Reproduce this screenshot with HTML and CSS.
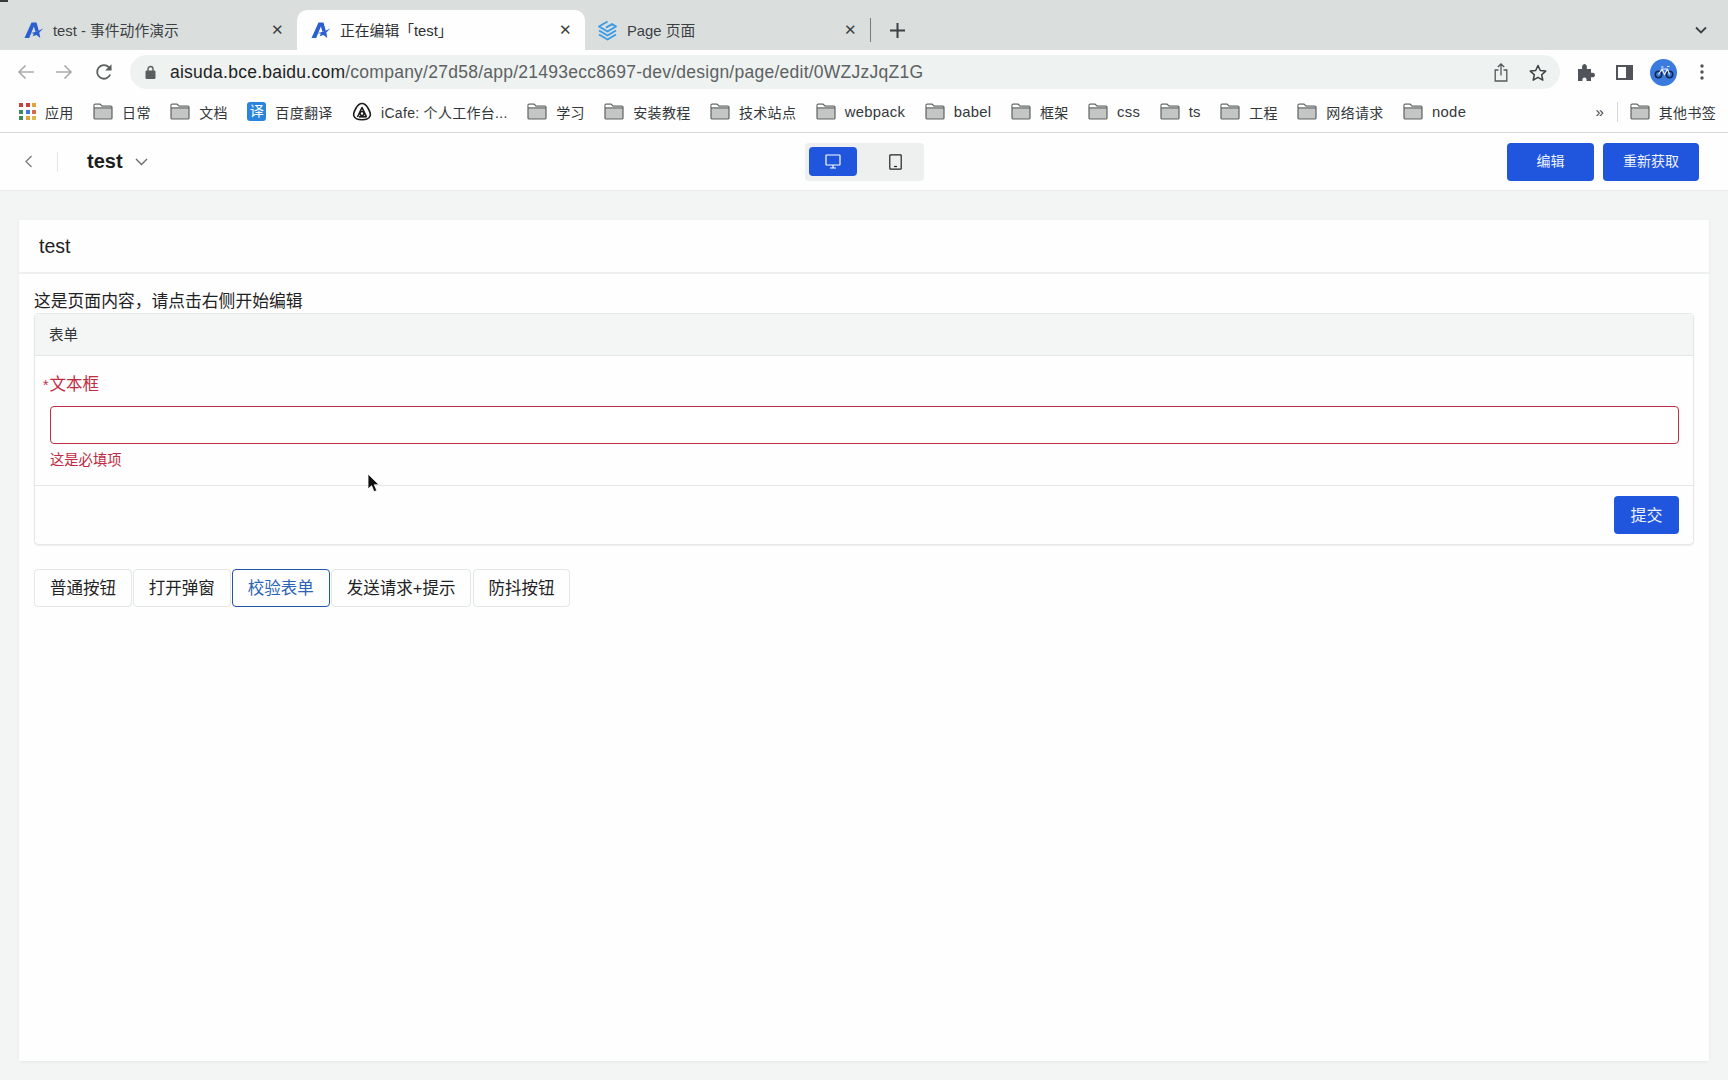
FILE: index.html
```html
<!DOCTYPE html>
<html lang="zh-CN">
<head>
    <meta charset="UTF-8">
    <title>正在编辑「test」</title>
    <link rel="stylesheet" href="styles.css">
</head>
<body>
    <svg class="defs" width="0" height="0">
        <symbol id="folder" viewBox="0 0 20 17">
            <path d="M1 15V2.200C1 1.500 1.500 1 2.200 1H7l2 2h8.800c.7 0 1.200.5 1.200 1.200V15c0 .6-.5 1-1.200 1H2.200C1.500 16 1 15.600 1 15z" fill="#c4c6c5" stroke="#5f6362" stroke-width="1.200"/>
            <path d="M1 5h18" stroke="#5f6362" stroke-width="1"/>
            <path d="M1.600 2h5.200l2 2H1.600z" fill="#fff"/>
        </symbol>
        <symbol id="aisuda" viewBox="0 0 20 18">
            <path d="M0.500 17 7.500 1.500h5l2.300 8.300-3.400 1-1.500-5.200-4.700 11.400z" fill="#2b5fd0"/>
            <path d="M6.500 12c3.500-.6 7.500-1.800 13-4.800l-4.200 4.300 1 5.500-3.800-3-4 1.200 1.400-2.500z" fill="#2b5fd0"/>
        </symbol>
    </svg>

    <span class="corner-mark"></span>

    <!-- Tab strip -->
    <div class="tabstrip">
        <div class="tab">
            <svg class="tab-icon" width="20" height="18"><use href="#aisuda"/></svg>
            <span class="tab-title">test - 事件动作演示</span>
            <span class="tab-close">✕</span>
        </div>
        <div class="tab tab-active">
            <svg class="tab-icon" width="20" height="18"><use href="#aisuda"/></svg>
            <span class="tab-title">正在编辑「test」</span>
            <span class="tab-close">✕</span>
        </div>
        <div class="tab tab-third">
            <svg class="tab-icon" width="21" height="21" viewBox="0 0 21 21" fill="none" stroke="#3d9be6" stroke-width="2" stroke-linejoin="round">
                <path d="M10.500 1.500 2 6.500l8.500 5 8.500-5-4-2.400-6 3.600"/>
                <path d="M2 10.500l8.500 5 8.500-5"/>
                <path d="M2 14.500l8.500 5 8.500-5"/>
            </svg>
            <span class="tab-title">Page 页面</span>
            <span class="tab-close">✕</span>
        </div>
        <span class="tab-sep"></span>
        <svg class="tab-new" width="15" height="15" viewBox="0 0 15 15"><path d="M7.500 0v15M0 7.500h15" stroke="#3c4043" stroke-width="2"/></svg>
        <svg class="tab-more" width="12" height="8" viewBox="0 0 12 8"><path d="M1 1.500l5 5 5-5" fill="none" stroke="#3c4043" stroke-width="1.800"/></svg>
    </div>

    <!-- Toolbar -->
    <div class="toolbar">
        <svg class="nav-icon" width="18" height="16" viewBox="0 0 18 16"><path d="M17 8H2M8.500 1.500 2 8l6.500 6.500" fill="none" stroke="#a9adac" stroke-width="1.700"/></svg>
        <svg class="nav-icon" width="18" height="16" viewBox="0 0 18 16"><path d="M1 8h15M9.500 1.500 16 8l-6.500 6.500" fill="none" stroke="#a9adac" stroke-width="1.700"/></svg>
        <svg class="nav-icon" width="18" height="18" viewBox="0 0 18 18"><path d="M15.200 11.500A6.800 6.800 0 1 1 13.800 4.200L16 6.500" fill="none" stroke="#5a5e5e" stroke-width="1.800"/><path d="M16.500 1.200v6.300h-6.300z" fill="#5a5e5e"/></svg>
        <div class="address">
            <svg width="11" height="14" viewBox="0 0 11 14"><path d="M3 6V4a2.500 2.500 0 0 1 5 0v2" fill="none" stroke="#5a5e5e" stroke-width="1.400"/><rect x="0.500" y="5.500" width="10" height="8.500" rx="1.200" fill="#5a5e5e"/></svg>
            <span class="url"><b>aisuda.bce.baidu.com</b>/company/27d58/app/21493ecc8697-dev/design/page/edit/0WZJzJqZ1G</span>
            <svg class="addr-share" width="14" height="19" viewBox="0 0 14 19" fill="none" stroke="#54585a" stroke-width="1.300"><path d="M4.500 7H1.200v11h11.600V7H9.500M7 12.500V1M3.800 4 7 1l3.200 3"/></svg>
            <svg width="18" height="17" viewBox="0 0 18 17"><path d="M9 1.500l2.300 5 5.400.6-4 3.700 1.100 5.300L9 13.400l-4.800 2.700 1.100-5.300-4-3.700 5.400-.6z" fill="none" stroke="#3c4043" stroke-width="1.500" stroke-linejoin="round"/></svg>
        </div>
        <svg class="tool-puzzle" width="18" height="18" viewBox="0 0 18 18"><path d="M1 6h4.200C4.600 3.200 5.600 1 7.500 1s2.900 2.200 2.300 5H14v3.800c2.500-.6 4 .4 4 2.200s-1.500 2.800-4 2.200V18H9.500c.5-2.200-.4-3.400-2-3.400S5 15.800 5.500 18H1z" fill="#50545a"/></svg>
        <svg class="tool-panel" width="17" height="15" viewBox="0 0 17 15"><rect x="1" y="1" width="15" height="13" fill="none" stroke="#50545a" stroke-width="2"/><rect x="10" y="1" width="6" height="13" fill="#50545a"/></svg>
        <div class="avatar">
            <svg width="20" height="14" viewBox="0 0 20 14" fill="none"><circle cx="4.500" cy="9.500" r="3.200" stroke="#16264a" stroke-width="1.600"/><circle cx="15.500" cy="9.500" r="3.200" stroke="#16264a" stroke-width="1.600"/><path d="M4.500 9.500 8 4h5.500l2 5.500M8 4l2.500 5.500 3-5.500M7 2h2.500M13 1.500h2.500" stroke="#e8eefa" stroke-width="1.100"/></svg>
        </div>
        <svg class="tool-kebab" width="4" height="16" viewBox="0 0 4 16" fill="#50545a"><circle cx="2" cy="2" r="1.700"/><circle cx="2" cy="8" r="1.700"/><circle cx="2" cy="14" r="1.700"/></svg>
    </div>

    <!-- Bookmarks -->
    <div class="bookmarks">
        <div class="bm">
            <span class="apps"><i class="c1"></i><i class="c1"></i><i class="c2"></i><i class="c3"></i><i class="c4"></i><i class="c5"></i><i class="c3"></i><i class="c2"></i><i class="c6"></i></span>
            应用
        </div>
        <div class="bm"><svg width="20" height="17"><use href="#folder"/></svg>日常</div>
        <div class="bm"><svg width="20" height="17"><use href="#folder"/></svg>文档</div>
        <div class="bm"><span class="fanyi">译</span>百度翻译</div>
        <div class="bm">
            <svg width="20" height="20" viewBox="0 0 20 20" fill="none" stroke="#1c1c1c" stroke-width="1.600" stroke-linejoin="round"><path d="M10 1.500c3 0 4.600 2 6.200 5 1.600 3 2.900 5 1.900 7.500-1 2.500-3.600 3.700-8.100 3.700S2.900 16.500 1.900 14s.3-4.500 1.900-7.500 3.200-5 6.200-5z"/><path d="M5.500 15 10 5.500 14.500 14.800"/><path d="M7 14.800h7.500"/><circle cx="10" cy="11.500" r="2"/></svg>
            iCafe: 个人工作台...
        </div>
        <div class="bm"><svg width="20" height="17"><use href="#folder"/></svg>学习</div>
        <div class="bm"><svg width="20" height="17"><use href="#folder"/></svg>安装教程</div>
        <div class="bm"><svg width="20" height="17"><use href="#folder"/></svg>技术站点</div>
        <div class="bm bm-latin"><svg width="20" height="17"><use href="#folder"/></svg>webpack</div>
        <div class="bm bm-latin"><svg width="20" height="17"><use href="#folder"/></svg>babel</div>
        <div class="bm"><svg width="20" height="17"><use href="#folder"/></svg>框架</div>
        <div class="bm bm-latin"><svg width="20" height="17"><use href="#folder"/></svg>css</div>
        <div class="bm bm-latin"><svg width="20" height="17"><use href="#folder"/></svg>ts</div>
        <div class="bm"><svg width="20" height="17"><use href="#folder"/></svg>工程</div>
        <div class="bm"><svg width="20" height="17"><use href="#folder"/></svg>网络请求</div>
        <div class="bm bm-latin"><svg width="20" height="17"><use href="#folder"/></svg>node</div>
        <span class="bm-more">»</span>
        <span class="bm-sep"></span>
        <div class="bm"><svg width="20" height="17"><use href="#folder"/></svg>其他书签</div>
    </div>

    <!-- App header -->
    <header class="app-header">
        <div class="header-left">
            <svg class="back" width="9" height="13" viewBox="0 0 9 13"><path d="M7.500 1 2 6.500 7.500 12" fill="none" stroke="#777b7d" stroke-width="1.300"/></svg>
            <span class="header-sep"></span>
            <span class="app-name">test</span>
            <svg width="13" height="8" viewBox="0 0 13 8"><path d="M1 1l5.500 5.500L12 1" fill="none" stroke="#666a6c" stroke-width="1.300"/></svg>
        </div>
        <div class="device-switch">
            <span class="device device-on">
                <svg width="16" height="15" viewBox="0 0 16 15" fill="none" stroke="#fff" stroke-width="1.200"><rect x="1" y="1" width="14" height="10" rx="0.500"/><path d="M8 11v3M5 14h6"/></svg>
            </span>
            <span class="device">
                <svg width="13" height="16" viewBox="0 0 13 16" fill="none" stroke="#222" stroke-width="1.200"><rect x="0.800" y="0.800" width="11.400" height="14.400" rx="0.800"/><path d="M5 12.500h3"/></svg>
            </span>
        </div>
        <div class="header-right">
            <button class="btn-primary btn-edit">编辑</button>
            <button class="btn-primary btn-fetch">重新获取</button>
        </div>
    </header>

    <!-- Page content -->
    <main class="page">
        <section class="card">
            <div class="card-title">test</div>
            <div class="card-body">
                <p class="intro">这是页面内容，请点击右侧开始编辑</p>
                <form class="panel">
                    <div class="panel-head">表单</div>
                    <div class="panel-body">
                        <label class="field-label"><span class="star">*</span>文本框</label>
                        <input class="field-input" type="text">
                        <div class="field-error">这是必填项</div>
                    </div>
                    <div class="panel-foot">
                        <button class="btn-primary btn-submit" type="button">提交</button>
                    </div>
                </form>
                <div class="btn-row">
                    <button class="btn">普通按钮</button>
                    <button class="btn">打开弹窗</button>
                    <button class="btn btn-focus">校验表单</button>
                    <button class="btn">发送请求+提示</button>
                    <button class="btn">防抖按钮</button>
                </div>
            </div>
        </section>
    </main>

    <!-- Mouse pointer caught in the capture -->
    <svg class="pointer" width="13" height="20" viewBox="0 0 13 20"><path d="M1 1v15l3.600-3.300 2.400 6 2.800-1.200-2.500-5.700H12z" fill="#111" stroke="#fff" stroke-width="0.800"/></svg>
</body>
</html>
```

FILE: styles.css
```css
* {
    box-sizing: border-box;
}

html, body {
    height: 100%;
}

body {
    margin: 0;
    height: 1080px;
    overflow: hidden;
    display: flex;
    flex-direction: column;
    font-family: "Liberation Sans", "Noto Sans CJK SC", sans-serif;
    color: #1f2224;
    background-color: #f3f5f4;
}

.defs {
    position: absolute;
}

.corner-mark {
    position: absolute;
    left: 0;
    top: 0;
    width: 8px;
    height: 2px;
    background-color: #3a3d3d;
}

/* Tab strip */
.tabstrip {
    height: 50px;
    flex: none;
    display: flex;
    align-items: flex-end;
    background-color: #dadfde;
    padding-right: 21px;
}

.tab {
    width: 297px;
    height: 40px;
    display: flex;
    align-items: center;
    padding: 0 13px 0 24px;
    font-size: 14.800px;
    color: #3c4043;
}

.tab-active {
    width: 288px;
    padding-left: 14px;
    background-color: #fdfefd;
    border-radius: 10px 10px 0 0;
    color: #2c2f31;
}

.tab-third {
    width: 285px;
    padding: 0 13px 0 12px;
}

.tab-icon {
    flex: none;
    margin-right: 9px;
}

.tab-title {
    flex: 1;
    padding-bottom: 2px;
    white-space: nowrap;
}

.tab-close {
    font-size: 15px;
    color: #3c4043;
}

.tab-sep {
    width: 1px;
    height: 24px;
    margin: 0 0 8px 0;
    background-color: #74797a;
}

.tab-new {
    margin: 0 0 12px 19px;
}

.tab-more {
    margin: 0 0 16px auto;
}

/* Toolbar */
.toolbar {
    height: 39px;
    flex: none;
    display: flex;
    align-items: center;
    background-color: #fdfefd;
    padding: 5px 0 0 17px;
}

.nav-icon {
    flex: none;
    margin-right: 20px;
}

.nav-icon:nth-child(3) {
    margin-left: 2px;
    margin-right: 17px;
}

.address {
    width: 1430px;
    height: 34px;
    display: flex;
    align-items: center;
    border-radius: 17px;
    background-color: #eef2f0;
    padding: 0 13px 0 15px;
}

.url {
    flex: 1;
    margin-left: 14px;
    font-size: 17.500px;
    letter-spacing: 0.250px;
    color: #5d6163;
    white-space: nowrap;
}

.url b {
    font-weight: normal;
    color: #1f2224;
}

.addr-share {
    margin-right: 21px;
}

.tool-puzzle {
    margin-left: 17px;
}

.tool-panel {
    margin-left: 21px;
}

.avatar {
    width: 27px;
    height: 27px;
    margin-left: 17px;
    border-radius: 50%;
    background-color: #3a7be0;
    display: flex;
    align-items: center;
    justify-content: center;
}

.tool-kebab {
    margin-left: 23px;
}

/* Bookmarks */
.bookmarks {
    height: 44px;
    flex: none;
    display: flex;
    align-items: center;
    gap: 19.500px;
    padding: 2px 12px 0 19px;
    background-color: #fdfefd;
    border-bottom: 1px solid #d5d8d8;
}

.bm {
    display: flex;
    align-items: center;
    gap: 9px;
    font-size: 14px;
    letter-spacing: 0.300px;
    color: #33373a;
    white-space: nowrap;
}

.bm-latin {
    font-size: 14.800px;
}

.apps {
    width: 17px;
    height: 17px;
    display: grid;
    grid-template-columns: repeat(3, 4px);
    grid-auto-rows: 4px;
    gap: 2.500px;
}

.apps i {
    display: block;
}

.c1 { background-color: #c8423a; }
.c2 { background-color: #e0a43a; }
.c3 { background-color: #3c8a5a; }
.c4 { background-color: #3f78dc; }
.c5 { background-color: #d86a4a; }
.c6 { background-color: #e0b84a; }

.fanyi {
    width: 19px;
    height: 19px;
    border-radius: 3px;
    background-color: #2b84dc;
    color: #fff;
    font-size: 14px;
    letter-spacing: 0;
    line-height: 19px;
    text-align: center;
}

.bm-more {
    margin-left: auto;
    margin-right: 2px;
    font-size: 15px;
    color: #44484a;
}

.bm-sep {
    width: 1px;
    height: 20px;
    margin: 0 -8px 0 -8px;
    background-color: #d5d8d8;
}

/* App header */
.app-header {
    height: 58px;
    flex: none;
    display: grid;
    grid-template-columns: 1fr auto 1fr;
    align-items: center;
    background-color: #fdfefd;
    border-bottom: 1px solid #e8ebea;
    padding: 0 29px;
}

.header-left {
    display: flex;
    align-items: center;
}

.back {
    margin-left: -5px;
}

.header-sep {
    width: 1px;
    height: 20px;
    margin: 0 29px 0 24px;
    background-color: #e2e5e5;
}

.app-name {
    font-size: 20px;
    font-weight: bold;
    color: #1c1f21;
    margin-right: 12px;
}

.device-switch {
    width: 119px;
    height: 38px;
    display: flex;
    align-items: center;
    gap: 5px;
    padding: 0 4px;
    border-radius: 4px;
    background-color: #eef0f0;
}

.device {
    width: 48px;
    height: 29px;
    display: flex;
    align-items: center;
    justify-content: center;
    border-radius: 4px;
}

.device + .device {
    margin-left: 10px;
}

.device-on {
    background-color: #2055de;
}

.header-right {
    display: flex;
    justify-content: flex-end;
    gap: 9px;
}

.btn-primary {
    height: 38px;
    padding: 0 0 3px;
    border: none;
    border-radius: 4px;
    background-color: #2055de;
    color: #eef3ff;
    font-family: inherit;
    font-size: 14px;
}

.btn-edit {
    width: 87px;
}

.btn-fetch {
    width: 96px;
}

/* Page */
.page {
    flex: 1;
    padding: 29px 19px 19px;
    min-height: 0;
}

.card {
    height: 100%;
    background-color: #fdfefd;
    box-shadow: 0 1px 3px rgba(0, 0, 0, 0.06);
}

.card-title {
    height: 54px;
    padding-left: 20px;
    font-size: 19.500px;
    line-height: 53px;
    color: #1f2224;
    border-bottom: 2px solid #eef0f0;
}

.card-body {
    padding: 16px 15px;
}

.intro {
    margin: 0;
    height: 23px;
    font-size: 16.800px;
    line-height: 23px;
    color: #1f2224;
}

.panel {
    height: 232px;
    display: flex;
    flex-direction: column;
    border: 1px solid #e3e7e7;
    border-radius: 4px;
    box-shadow: 0 1px 2px rgba(0, 0, 0, 0.06);
}

.panel-head {
    height: 42px;
    flex: none;
    padding-left: 14px;
    font-size: 14.500px;
    line-height: 43px;
    background-color: #f3f6f5;
    border-bottom: 1px solid #e3e7e7;
    color: #33373a;
}

.panel-body {
    height: 130px;
    flex: none;
    padding: 16px 14px 0 15px;
    border-bottom: 1px solid #e3e7e7;
}

.field-label {
    display: block;
    height: 34px;
    margin-left: -7px;
    font-size: 16.500px;
    line-height: 24px;
    color: #c02c43;
}

.star {
    font-size: 14px;
    margin-right: 1px;
}

.field-input {
    display: block;
    width: 100%;
    height: 38px;
    border: 1px solid #c02c43;
    border-radius: 4px;
    background-color: #fff;
    outline: none;
}

.field-error {
    margin-top: 6px;
    font-size: 14.300px;
    line-height: 20px;
    color: #c02c43;
}

.panel-foot {
    flex: 1;
    display: flex;
    justify-content: flex-end;
    align-items: center;
    padding-right: 14px;
}

.btn-submit {
    width: 65px;
    font-size: 16px;
}

.btn-row {
    display: flex;
    gap: 1.200px;
    margin-top: 24px;
}

.btn {
    height: 38px;
    padding: 0 14.900px 3px;
    background-color: #fdfefd;
    border: 1px solid #e3e7e7;
    border-radius: 4px;
    color: #1f2224;
    font-family: inherit;
    font-size: 16.500px;
}

.btn-focus {
    border-color: #2055a8;
    color: #2a62b8;
}

.pointer {
    position: absolute;
    left: 367px;
    top: 473px;
}
```
